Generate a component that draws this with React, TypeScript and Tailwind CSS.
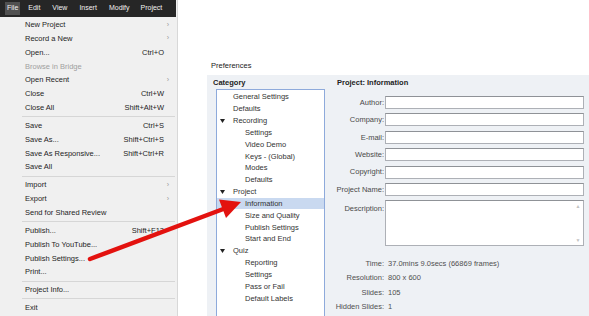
type Item = { label: string; shortcut?: string; sub?: boolean; disabled?: boolean } | "sep";

const fileMenu: Item[] = [
  { label: "New Project", sub: true },
  { label: "Record a New", sub: true },
  { label: "Open...", shortcut: "Ctrl+O" },
  { label: "Browse in Bridge", disabled: true },
  { label: "Open Recent", sub: true },
  { label: "Close", shortcut: "Ctrl+W" },
  { label: "Close All", shortcut: "Shift+Alt+W" },
  "sep",
  { label: "Save", shortcut: "Ctrl+S" },
  { label: "Save As...", shortcut: "Shift+Ctrl+S" },
  { label: "Save As Responsive...", shortcut: "Shift+Ctrl+R" },
  { label: "Save All" },
  "sep",
  { label: "Import", sub: true },
  { label: "Export", sub: true },
  { label: "Send for Shared Review" },
  "sep",
  { label: "Publish...", shortcut: "Shift+F12" },
  { label: "Publish To YouTube..." },
  { label: "Publish Settings..." },
  { label: "Print..." },
  "sep",
  { label: "Project Info..." },
  "sep",
  { label: "Exit" },
];

const tree: { label: string; level: number; open?: boolean; selected?: boolean }[] = [
  { label: "General Settings", level: 1 },
  { label: "Defaults", level: 1 },
  { label: "Recording", level: 0, open: true },
  { label: "Settings", level: 2 },
  { label: "Video Demo", level: 2 },
  { label: "Keys - (Global)", level: 2 },
  { label: "Modes", level: 2 },
  { label: "Defaults", level: 2 },
  { label: "Project", level: 0, open: true },
  { label: "Information", level: 2, selected: true },
  { label: "Size and Quality", level: 2 },
  { label: "Publish Settings", level: 2 },
  { label: "Start and End", level: 2 },
  { label: "Quiz", level: 0, open: true },
  { label: "Reporting", level: 2 },
  { label: "Settings", level: 2 },
  { label: "Pass or Fail", level: 2 },
  { label: "Default Labels", level: 2 },
];

const fields = ["Author:", "Company:", "E-mail:", "Website:", "Copyright:", "Project Name:"];

const info = [
  ["Time:", "37.0mins 9.0secs (66869 frames)"],
  ["Resolution:", "800 x 600"],
  ["Slides:", "105"],
  ["Hidden Slides:", "1"],
];

function Triangle() {
  return (
    <svg width="5" height="4" viewBox="0 0 5 4" className="shrink-0">
      <polygon points="0,0 5,0 2.5,4" fill="#222" />
    </svg>
  );
}

export default function App() {
  return (
    <div className="relative flex h-[316px] w-[589px] overflow-hidden bg-white font-[Liberation_Sans,Arial,sans-serif] text-[7.5px]">
      {/* file menu */}
      <div className="flex h-full w-[178px] shrink-0 flex-col border-r border-[#d8d8d8] bg-[#f0f0f0] text-[#1e1e1e]">
        <div className="flex h-[17px] w-[176px] items-center bg-[#262626] text-[7px] text-[#f0f0f0]">
          <span className="ml-[5px] flex h-[13px] items-center bg-[#505050] px-[2px]">File</span>
          <span className="ml-[8px]">Edit</span>
          <span className="ml-[12px]">View</span>
          <span className="ml-[12px]">Insert</span>
          <span className="ml-[12px]">Modify</span>
          <span className="ml-[11px]">Project</span>
        </div>
        <div className="flex flex-col pt-[1px]">
          {fileMenu.map((it, i) =>
            it === "sep" ? (
              <div key={i} className="flex h-[4.2px] items-center pl-[22px] pr-[2px]">
                <div className="h-px w-full bg-[#d6d6d6]" />
              </div>
            ) : (
              <div key={i} className="flex h-[13.8px] items-center pl-[25px] pr-[13px]">
                <span className={it.disabled ? "text-[#a0a0a0]" : ""}>{it.label}</span>
                <span className="ml-auto">{it.shortcut}</span>
                {it.sub && <span className="-mr-[5px] text-[7px] text-[#9a9a9a]">›</span>}
              </div>
            )
          )}
        </div>
      </div>

      {/* preferences */}
      <div className="flex flex-1 flex-col pl-[29px] pt-[59px]">
        <div className="h-[13px] pl-[4px] leading-[13px] text-[#222]">Preferences</div>
        <div className="mt-[3px] flex flex-1 overflow-hidden bg-[#eef1f5]">
          <div className="flex w-[123px] shrink-0 flex-col">
            <div className="h-[10px] pl-[6px] pt-[3px] font-bold leading-[10px] text-[#222] box-content">Category</div>
            <div className="ml-[9px] mt-[1px] h-[240px] w-[109px] shrink-0 border border-[#8eaadb] bg-white pt-[1px] text-[#333]">
              {tree.map((t, i) => (
                <div
                  key={i}
                  className={`flex h-[11.85px] items-center ${t.selected ? "bg-[#c9d9f0]" : ""}`}
                >
                  {t.level === 0 ? (
                    <div className="flex items-center pl-[3px]">
                      <Triangle />
                      <span className="ml-[8px]">{t.label}</span>
                    </div>
                  ) : (
                    <span className={t.level === 1 ? "pl-[16px]" : "pl-[28px]"}>{t.label}</span>
                  )}
                </div>
              ))}
            </div>
          </div>

          <div className="flex flex-1 flex-col text-[#4a4a4a]">
            <div className="h-[10px] pl-[7px] pt-[3px] font-bold leading-[10px] text-[#222] box-content">
              Project: Information
            </div>
            <div className="mt-[8px] flex flex-col gap-[4.4px]">
              {fields.map((f) => (
                <div key={f} className="flex h-[13px] items-center">
                  <span className="w-[55px] pr-[1px] text-right">{f}</span>
                  <div className="h-[13px] w-[199px] border border-[#adb0b6] border-t-[#8f9297] bg-white" />
                </div>
              ))}
              <div className="flex h-[46px]">
                <span className="w-[55px] pr-[1px] pt-[3px] text-right">Description:</span>
                <div className="flex h-[46px] w-[199px] border border-[#adb0b6] border-t-[#8f9297] bg-white">
                  <div className="ml-auto flex w-[10px] flex-col items-center justify-between py-[2px] text-[5px] leading-[6px] text-[#c2c2c2]">
                    <span>▲</span>
                    <span>▼</span>
                  </div>
                </div>
              </div>
            </div>
            <div className="mt-[10px] flex flex-col text-[#505050]">
              {info.map(([k, v]) => (
                <div key={k} className="flex h-[14.5px] items-center">
                  <span className="w-[54px] text-right">{k}</span>
                  <span className="ml-[4px]">{v}</span>
                </div>
              ))}
            </div>
          </div>
        </div>
      </div>

      {/* red arrow */}
      <svg className="pointer-events-none absolute left-0 top-0" width="589" height="316" viewBox="0 0 589 316">
        <line x1="90" y1="259" x2="226" y2="208" stroke="#e3120f" strokeWidth="4.5" strokeLinecap="round" />
        <polygon points="241,202 219,199.5 226,218" fill="#e3120f" />
      </svg>
    </div>
  );
}
